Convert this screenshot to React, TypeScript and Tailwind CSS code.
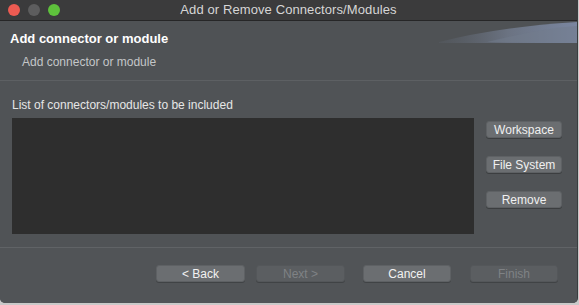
import React from "react";

const font = { fontFamily: '"Liberation Sans", Arial, sans-serif' };

const SideButton = ({ label }: { label: string }) => (
    <button className="w-[76px] h-[17px] rounded-[3px] bg-[#6b6e71] border border-[#5e6164] text-[12px] leading-none text-[#f0f0f0] shadow-[0_1px_0_rgba(0,0,0,0.25)]">
        {label}
    </button>
);

const FooterButton = ({ label, disabled, className }: { label: string; disabled?: boolean; className?: string }) => (
    <button
        disabled={disabled}
        className={`h-[17px] rounded-[3px] border text-[12px] leading-none shadow-[0_1px_0_rgba(0,0,0,0.2)] ${
            disabled
                ? "bg-[#5b5e61] border-[#54575a] text-[#7f8285]"
                : "bg-[#6b6e71] border-[#5e6164] text-[#f2f2f2]"
        } ${className ?? ""}`}
    >
        {label}
    </button>
);

export default function App() {
    return (
        <div className="w-[579px] h-[305px] bg-[#c9c9c9]" style={font}>
            <div className="w-[578px] h-[303px] flex flex-col bg-[#505356] rounded-b-[5px] overflow-hidden border-r border-[#3a3c3e]">
                {/* title bar */}
                <div className="relative h-[21px] shrink-0 bg-[#3b3b3c] border-b border-[#262627] flex items-center justify-center">
                    <div className="absolute left-[8px] top-[4px] flex gap-[8px]">
                        <span className="w-[12px] h-[12px] rounded-full bg-[#ed5b52]" />
                        <span className="w-[12px] h-[12px] rounded-full bg-[#5d5d5e]" />
                        <span className="w-[12px] h-[12px] rounded-full bg-[#5ec13c]" />
                    </div>
                    <span className="text-[13px] text-[#d6d6d6] tracking-[0.1px]">Add or Remove Connectors/Modules</span>
                </div>

                {/* header */}
                <div className="relative h-[60px] shrink-0 bg-[#4f5255] border-b border-[#5d6063] pl-[10px] pt-[10px]">
                    <svg className="absolute right-0 top-0" width="140" height="24" viewBox="0 0 140 24">
                        <defs>
                            <linearGradient id="sw" x1="0" x2="1" y1="0" y2="0">
                                <stop offset="0" stopColor="#5a6069" stopOpacity="0.3" />
                                <stop offset="0.5" stopColor="#6b7382" />
                                <stop offset="1" stopColor="#7a86a0" />
                            </linearGradient>
                        </defs>
                        <path d="M2 21 Q60 6 140 1 L140 22 L2 22 Z" fill="url(#sw)" />
                        <path d="M50 21 Q100 8 140 5 L140 22 Z" fill="#727b8b" opacity="0.5" />
                    </svg>
                    <div className="text-[13px] font-bold text-white leading-[16px]">Add connector or module</div>
                    <div className="text-[12px] text-[#c4c6c8] leading-[14px] mt-[8px] ml-[12px]">Add connector or module</div>
                </div>

                {/* body */}
                <div className="flex-1 flex flex-col px-[12px] pt-[17px] border-b border-[#606366]">
                    <div className="text-[12px] text-[#e6e6e6] leading-[14px]">List of connectors/modules to be included</div>
                    <div className="flex mt-[6px]">
                        <div className="w-[462px] h-[116px] bg-[#2e2e2e]" />
                        <div className="flex flex-col gap-[18px] ml-[12px] pt-[3px]">
                            <SideButton label="Workspace" />
                            <SideButton label="File System" />
                            <SideButton label="Remove" />
                        </div>
                    </div>
                </div>

                {/* footer */}
                <div className="h-[55px] shrink-0 flex justify-end items-start pt-[17px] pr-[19px] bg-[#515457]">
                    <FooterButton label="< Back" className="w-[89px]" />
                    <FooterButton label="Next >" disabled className="w-[89px] ml-[11px]" />
                    <FooterButton label="Cancel" className="w-[88px] ml-[18px]" />
                    <FooterButton label="Finish" disabled className="w-[88px] ml-[19px]" />
                </div>
            </div>
        </div>
    );
}
